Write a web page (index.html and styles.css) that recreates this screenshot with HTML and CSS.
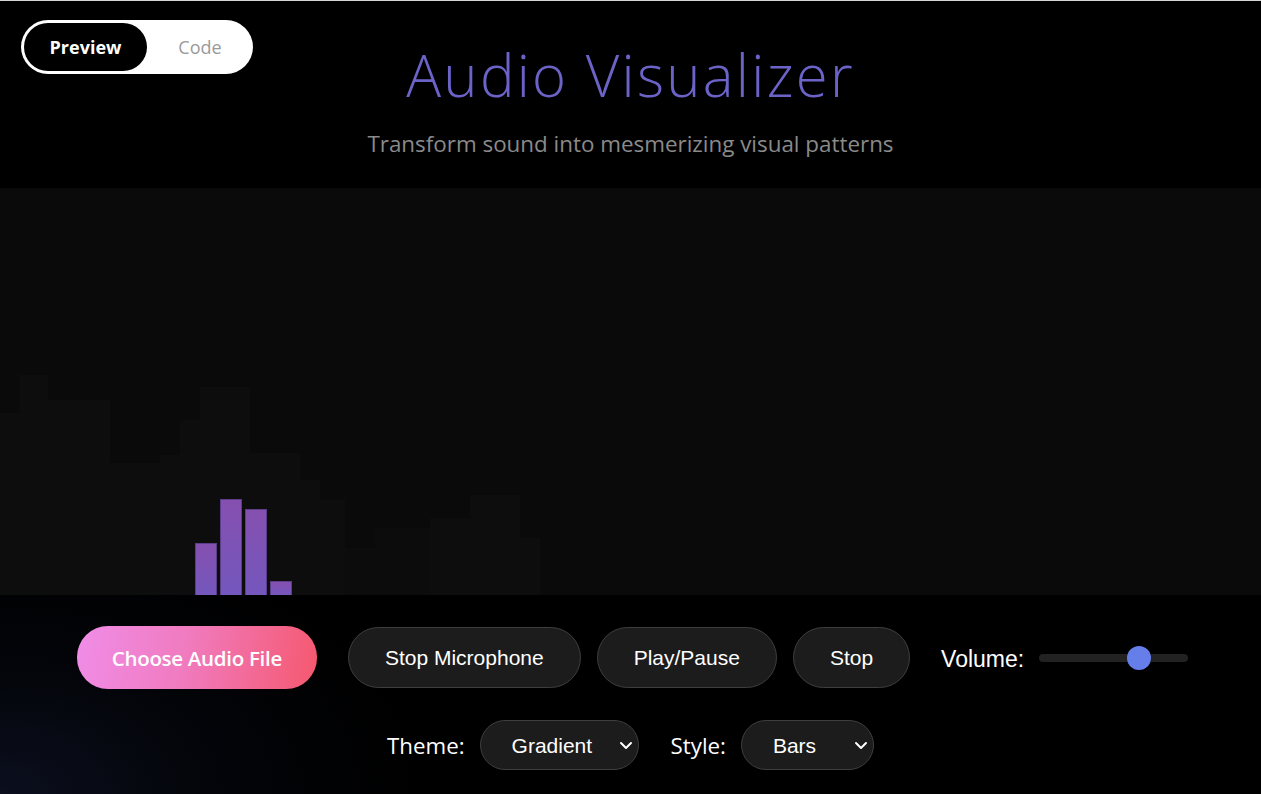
FILE: index.html
```html
<!DOCTYPE html>
<html lang="en">
<head>
<meta charset="utf-8">
<title>Audio Visualizer</title>
<link rel="stylesheet" href="styles.css">
</head>
<body>
<div class="page">
  <header class="header">
    <div class="toggle">
      <span class="toggle-opt active">Preview</span>
      <span class="toggle-opt">Code</span>
    </div>
    <h1 class="title">Audio Visualizer</h1>
    <p class="subtitle">Transform sound into mesmerizing visual patterns</p>
  </header>

  <section class="stage">
    <svg class="ghosts" width="1261" height="407" viewBox="0 0 1261 407">
      <path class="ghost" d="M0 225 H20 V187 H48 V212 H110 V275 H160 V267 H180 V232 H200 V199 H250 V265 H300 V292 H320 V312 H345 V407 H0 Z"/>
      <path class="ghost" d="M430 407 V330 H470 V307 H520 V350 H540 V407 Z"/>
      <path class="ghost dim" d="M345 407 V360 H375 V340 H430 V407 Z"/>
    </svg>
    <div class="bars">
      <div class="bar" style="height:52px"></div>
      <div class="bar" style="height:96px"></div>
      <div class="bar" style="height:86px"></div>
      <div class="bar" style="height:14px"></div>
    </div>
  </section>

  <section class="controls">
    <div class="row">
      <button class="btn btn-primary">Choose Audio File</button>
      <button class="btn">Stop Microphone</button>
      <button class="btn">Play/Pause</button>
      <button class="btn">Stop</button>
      <label class="volume">
        <span class="vol-label">Volume:</span>
        <input class="slider" type="range" min="0" max="100" value="70">
      </label>
    </div>
    <div class="row row-2">
      <label class="field">
        <span class="field-label">Theme:</span>
        <span class="select-wrap sel-theme">
          <select class="select">
            <option>Gradient</option>
            <option>Neon</option>
            <option>Ocean</option>
          </select>
          <svg class="chev" width="14" height="9" viewBox="0 0 14 9"><path d="M2 2 L7 7 L12 2" fill="none" stroke="#fff" stroke-width="2" stroke-linecap="round" stroke-linejoin="round"/></svg>
        </span>
      </label>
      <label class="field">
        <span class="field-label">Style:</span>
        <span class="select-wrap sel-style">
          <select class="select">
            <option>Bars</option>
            <option>Wave</option>
            <option>Circle</option>
          </select>
          <svg class="chev" width="14" height="9" viewBox="0 0 14 9"><path d="M2 2 L7 7 L12 2" fill="none" stroke="#fff" stroke-width="2" stroke-linecap="round" stroke-linejoin="round"/></svg>
        </span>
      </label>
    </div>
  </section>
</div>
</body>
</html>
```

FILE: styles.css
```css
* { box-sizing: border-box; }

html, body {
  margin: 0;
  padding: 0;
  background: #000;
}

body {
  border-top: 1px solid #d6d6d6;
  font-family: "Open Sans", "Noto Sans", sans-serif;
  color: #fff;
  overflow: hidden;
}

.page {
  display: flex;
  flex-direction: column;
  height: 793px;
}

/* Header */
.header {
  position: relative;
  height: 187px;
  display: flex;
  flex-direction: column;
  align-items: center;
  background: #000;
}

.toggle {
  position: absolute;
  left: 21px;
  top: 19px;
  width: 232px;
  height: 54px;
  padding: 3px;
  background: #fff;
  border-radius: 27px;
  display: flex;
  align-items: center;
}

.toggle-opt {
  flex: 0 0 auto;
  height: 48px;
  display: flex;
  align-items: center;
  justify-content: center;
  font-size: 18px;
  color: #9a9a9a;
  width: 106px;
}

.toggle-opt.active {
  width: 123px;
  background: #000;
  color: #fff;
  font-weight: 700;
  border-radius: 24px;
}

.title {
  margin: 34px 0 0;
  font-family: "Open Sans", "Noto Sans", sans-serif;
  font-weight: 300;
  font-size: 58px;
  line-height: 80px;
  letter-spacing: 2.3px;
  color: #6c63c8;
}

.subtitle {
  margin: 14px 0 0;
  font-size: 22.4px;
  line-height: 30px;
  color: #8a8a8a;
}

/* Stage */
.stage {
  position: relative;
  height: 407px;
  background: #0a0a0a;
  overflow: hidden;
}

.ghosts {
  position: absolute;
  left: 0;
  top: 0;
}

.ghost { fill: #0d0d0d; }
.ghost.dim { fill: #0c0c0c; }

.bars {
  position: absolute;
  left: 195px;
  bottom: 0;
  display: flex;
  align-items: flex-end;
  gap: 3px;
}

.bar {
  width: 22px;
  background: linear-gradient(180deg, #8550b0 0%, #7457bd 100%);
  border: 1px solid #5b3d8a;
  border-bottom: none;
}

/* Controls */
.controls {
  flex: 1;
  padding-top: 31px;
  display: flex;
  flex-direction: column;
  align-items: center;
  gap: 31px;
  background:
    radial-gradient(ellipse 420px 260px at 0% 100%, #0b0f1e 0%, rgba(6,8,16,0.6) 50%, rgba(0,0,0,0) 100%),
    #000;
}

.row {
  display: flex;
  align-items: center;
  gap: 16px;
  padding-left: 4px;
}

.btn {
  height: 61px;
  padding: 0 36px;
  border-radius: 31px;
  border: 1px solid #3e3e3e;
  background: #1c1c1c;
  color: #fff;
  font-family: "Liberation Sans", Arial, sans-serif;
  font-size: 21px;
}

.btn-primary {
  height: 63px;
  padding: 0 35px;
  margin-right: 15px;
  border: none;
  background: linear-gradient(100deg, #f08de8 0%, #f07bbf 45%, #f5586e 100%);
  font-family: "Open Sans", "Noto Sans", sans-serif;
  font-weight: 600;
  font-size: 20.5px;
  letter-spacing: -0.3px;
}

.volume {
  display: flex;
  align-items: center;
  gap: 15px;
  margin-left: 15px;
}

.vol-label {
  font-family: "Liberation Sans", Arial, sans-serif;
  font-size: 23px;
  padding-top: 4px;
}

.slider {
  -webkit-appearance: none;
  appearance: none;
  width: 149px;
  height: 8px;
  margin: 0;
  border-radius: 4px;
  background: #222;
  outline: none;
}

.slider::-webkit-slider-thumb {
  -webkit-appearance: none;
  appearance: none;
  width: 24px;
  height: 24px;
  border-radius: 50%;
  background: #667eea;
  border: none;
}

.slider::-moz-range-thumb {
  width: 24px;
  height: 24px;
  border-radius: 50%;
  background: #667eea;
  border: none;
}

.row-2 {
  gap: 32px;
  padding-left: 0;
}

.field {
  display: flex;
  align-items: center;
  gap: 15px;
}

.field-label {
  font-family: "Open Sans", "Noto Sans", sans-serif;
  font-size: 22.3px;
}

.select-wrap {
  position: relative;
  display: block;
  height: 50px;
}

.sel-theme { width: 159px; }
.sel-style { width: 133px; }

.select {
  -webkit-appearance: none;
  appearance: none;
  width: 100%;
  height: 50px;
  padding: 0 0 0 31px;
  border-radius: 25px;
  border: 1px solid #3e3e3e;
  background: #1c1c1c;
  color: #fff;
  font-family: "Liberation Sans", Arial, sans-serif;
  font-size: 21px;
  outline: none;
}

.chev {
  position: absolute;
  right: 6px;
  top: 21px;
  pointer-events: none;
}
```
